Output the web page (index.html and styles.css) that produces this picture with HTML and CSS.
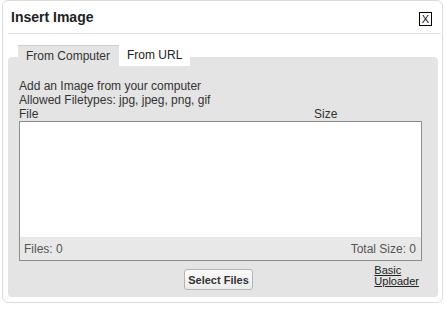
FILE: index.html
```html
<!DOCTYPE html>
<html lang="en">
<head>
  <meta charset="UTF-8">
  <title>Insert Image</title>
  <link rel="stylesheet" href="styles.css">
</head>
<body>
  <div class="dialog">
    <!-- Header -->
    <div class="dialog-header">
      <span class="dialog-title">Insert Image</span>
      <a href="#" class="close-btn">X</a>
    </div>

    <!-- Tabs -->
    <div class="tab-nav">
      <a href="#" class="tab active">From Computer</a>
      <a href="#" class="tab">From URL</a>
    </div>
    <div class="tab-panel">
      <div class="intro">
        Add an Image from your computer<br>
        Allowed Filetypes: jpg, jpeg, png, gif
      </div>
      <div class="list-head">
        <span class="col-file">File</span>
        <span class="col-size">Size</span>
      </div>
      <div class="file-list">
        <div class="file-rows"></div>
        <div class="file-footer">
          <span>Files: 0</span>
          <span>Total Size: 0</span>
        </div>
      </div>
      <div class="actions">
        <button class="select-btn">Select Files</button>
        <a href="#" class="basic-link">Basic<br>Uploader</a>
      </div>
    </div>
  </div>
</body>
</html>
```

FILE: styles.css
```css
/* General Styles */
body {
  margin: 0;
  background: #fff;
  font-family: 'Liberation Sans', Arial, sans-serif;
  color: #333;
}

.dialog {
  width: 439px;
  height: 301px;
  margin-left: 2px;
  border: 1px solid #dcdcdc;
  border-radius: 6px;
  background: #fff;
}

/* Header */
.dialog-header {
  display: flex;
  align-items: center;
  justify-content: space-between;
  height: 32px;
  margin: 0 1px 0 5px;
  padding: 0 9px 0 3px;
  border-bottom: 1px solid #e2e2e2;
}

.dialog-title {
  font-size: 14px;
  font-weight: bold;
  color: #222;
}

.close-btn {
  display: block;
  width: 11px;
  height: 12px;
  margin-top: 3px;
  border: 1px solid #000;
  font-size: 11px;
  line-height: 12px;
  text-align: center;
  color: #112;
  text-decoration: none;
}

/* Tabs */
.tab-nav {
  position: relative;
  z-index: 1;
  display: flex;
  height: 12px;
  margin: 11px 0 0 15px;
}

.tab {
  display: block;
  height: 21px;
  padding: 0 8px;
  font-size: 12px;
  line-height: 21px;
  color: #222;
  text-decoration: none;
  background: #fff;
}

.tab.active {
  width: 85px;
  height: 20px;
  line-height: 20px;
  border-top: 1px solid #cfcfcf;
  background: #e4e4e4;
  color: #333;
}

.tab-panel {
  width: 419px;
  margin-left: 5px;
  padding: 22px 0 7px 11px;
  background: #e4e4e4;
  border-radius: 4px;
  font-size: 12px;
  line-height: 14px;
}

.list-head {
  display: flex;
  width: 403px;
}

.col-file {
  flex: 1;
}

.col-size {
  width: 108px;
}

.file-list {
  width: 401px;
  border: 1px solid #8c8c8c;
}

.file-rows {
  height: 115px;
  background: #fff;
}

.file-footer {
  display: flex;
  justify-content: space-between;
  height: 23px;
  padding: 0 5px 0 4px;
  background: #e8e8e8;
  line-height: 24px;
  color: #555;
}

/* Actions */
.actions {
  display: grid;
  grid-template-columns: 1fr auto 1fr;
  width: 403px;
  margin-top: 4px;
}

.select-btn {
  grid-column: 2;
  height: 21px;
  margin-top: 4px;
  margin-right: 4px;
  padding: 0 3px;
  border: 1px solid #b4b4b4;
  border-radius: 3px;
  background: linear-gradient(#fafafa, #ececec);
  font-family: 'Liberation Sans', Arial, sans-serif;
  font-size: 11px;
  font-weight: bold;
  color: #333;
}

.basic-link {
  justify-self: end;
  margin-right: 3px;
  font-size: 11px;
  line-height: 11px;
  color: #222;
}
```
